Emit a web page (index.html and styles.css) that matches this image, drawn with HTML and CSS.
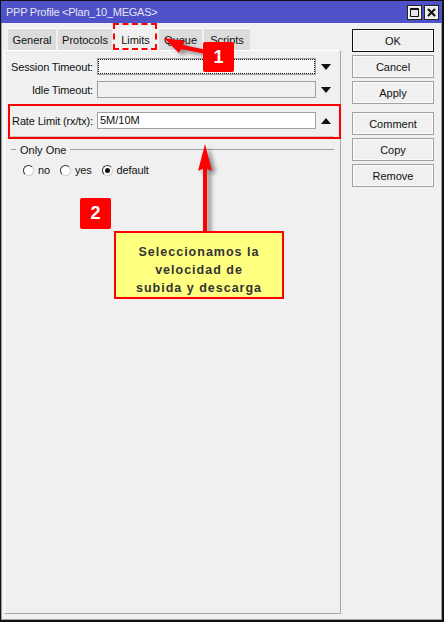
FILE: index.html
```html
<!DOCTYPE html>
<html lang="es">
<head>
<meta charset="utf-8">
<title>PPP Profile</title>
<link rel="stylesheet" href="styles.css">
</head>
<body>
<div class="window">
  <header class="titlebar">
    <span class="title">PPP Profile &lt;Plan_10_MEGAS&gt;</span>
    <div class="winbtns">
      <span class="winbtn"><svg width="11" height="11" viewBox="0 0 11 11"><path d="M1.500 1.500h8v8h-8z M1 2.500h9" fill="none" stroke="#111" stroke-width="1"/></svg></span>
      <span class="winbtn"><svg width="11" height="11" viewBox="0 0 11 11"><path d="M2 2l7 7M9 2l-7 7" fill="none" stroke="#111" stroke-width="2"/></svg></span>
    </div>
  </header>
  <div class="client">
    <div class="main">
      <nav class="tabs">
        <span class="tab t-general">General</span>
        <span class="tab t-protocols">Protocols</span>
        <span class="tab t-limits active">Limits</span>
        <span class="tab t-queue">Queue</span>
        <span class="tab t-scripts">Scripts</span>
      </nav>
      <section class="panel">
        <div class="row">
          <label class="lbl">Session Timeout:</label>
          <div class="field focus"></div>
          <svg class="tri" width="10" height="6" viewBox="0 0 10 6"><path d="M0 0h10L5 6z"/></svg>
        </div>
        <div class="row">
          <label class="lbl">Idle Timeout:</label>
          <div class="field off"></div>
          <svg class="tri" width="10" height="6" viewBox="0 0 10 6"><path d="M0 0h10L5 6z"/></svg>
        </div>
        <div class="row rate">
          <label class="lbl">Rate Limit (rx/tx):</label>
          <div class="field">5M/10M</div>
          <svg class="tri" width="10" height="6" viewBox="0 0 10 6"><path d="M0 6h10L5 0z"/></svg>
        </div>
        <div class="sep"></div>
        <div class="group-head">
          <span class="dash"></span><span class="group-title">Only One</span><span class="rule"></span>
        </div>
        <div class="radios">
          <span class="radio r-no"><i class="dot"></i>no</span>
          <span class="radio r-yes"><i class="dot"></i>yes</span>
          <span class="radio"><i class="dot on"></i>default</span>
        </div>
      </section>
    </div>
    <aside class="actions">
      <button class="btn primary">OK</button>
      <button class="btn">Cancel</button>
      <button class="btn">Apply</button>
      <button class="btn gap">Comment</button>
      <button class="btn">Copy</button>
      <button class="btn">Remove</button>
    </aside>
  </div>

  <div class="ring-tab"></div>
  <div class="ring-rate"></div>
  <svg class="arrows" width="444" height="622" viewBox="0 0 444 622">
    <defs><filter id="sh" x="-50%" y="-30%" width="200%" height="160%"><feGaussianBlur stdDeviation="2"/></filter></defs>
    <g fill="#444" opacity=".6" filter="url(#sh)" transform="translate(4 3)">
      <path d="M203 231V168h4v63z"/><path d="M205 144L212 171 205 168 198 171z"/>
      <path d="M164 38L185 41 183 45 207 50 206 54 181 49 179 53z"/>
    </g>
    <path fill="#f00" d="M203 231V166h4v65z"/>
    <path fill="#f00" d="M205 144L212 171 205 168 198 171z"/>
    <path fill="#f00" d="M164 38L185 41 183 45 207 50 206 54 181 49 179 53z"/>
  </svg>
  <span class="badge b1">1</span>
  <span class="badge b2">2</span>
  <div class="note">Seleccionamos la<br>velocidad de<br>subida y descarga</div>
</div>
</body>
</html>
```
FILE: styles.css
```css
* { box-sizing: border-box; }
html, body { margin: 0; padding: 0; background: #000; }
body { width: 444px; height: 622px; overflow: hidden; font: 11px "Liberation Sans", Arial, sans-serif; color: #111; }
.window { position: relative; width: 444px; height: 622px; background: #f0f0f0; border: 1px solid #111; border-width: 1px 2px 2px 1px; display: flex; flex-direction: column; box-shadow: inset 0 0 0 1px #a0a0a0; overflow: hidden; }
.titlebar { height: 22px; flex: none; background: #4f51c9; display: flex; align-items: center; justify-content: space-between; padding: 0 1px 0 5px; }
.title { color: #e4e4f4; letter-spacing: -.25px; white-space: nowrap; }
.winbtns { display: flex; gap: 2px; margin-right: 2px; }
.winbtn { width: 15px; height: 15px; background: #e8e8e8; border: 1px solid #222; display: flex; align-items: center; justify-content: center; box-shadow: inset 0 0 0 1px #f8f8f8; }
.client { flex: 1; display: flex; min-height: 0; }
.main { width: 340px; padding: 5px 0 6px 3px; display: flex; flex-direction: column; }
.tabs { display: flex; height: 22px; padding-left: 4px; gap: 2px; flex: none; }
.tab { background: #dcdcdc; display: flex; align-items: center; justify-content: center; border-top: 1px solid #fafafa; white-space: nowrap; }
.t-general { width: 48px; }
.t-protocols { width: 54px; }
.t-limits { width: 43px; background: #f0f0f0; }
.t-queue { width: 43px; }
.t-scripts { width: 46px; }
.panel { flex: 1; border: 1px solid #a8a8a8; border-left-color: #fff; border-top-color: #fff; padding: 7px 0 0 0; }
.row { display: flex; align-items: center; height: 17px; margin-bottom: 6px; }
.lbl { width: 88px; text-align: right; flex: none; margin-right: 4px; white-space: nowrap; letter-spacing: -.15px; }
.field { width: 219px; height: 17px; background: #f0f0f0; border: 1px solid #a0a0a0; flex: none; padding-left: 2px; line-height: 15px; }
.field.focus { background: #f8f8f8; outline: 1px dotted #111; outline-offset: -2px; }
.rate .field { background: #fff; }
.tri { margin-left: 5px; flex: none; fill: #111; }
.rate { margin-top: 14px; margin-bottom: 0; }
.sep { height: 1px; background: #c4c4c4; margin: 7px 6px 0 6px; }
.group-head { display: flex; align-items: center; margin: 6px 6px 0 6px; height: 13px; }
.dash { width: 5px; height: 1px; background: #a0a0a0; }
.group-title { padding: 0 4px; white-space: nowrap; }
.rule { flex: 1; height: 1px; background: #a0a0a0; }
.radios { display: flex; margin: 7px 0 0 18px; gap: 10px; }
.radio { display: flex; align-items: center; gap: 4px; height: 14px; letter-spacing: -.15px; }
.dot { width: 11px; height: 11px; border-radius: 50%; background: #fff; border: 1px solid #d0d0d0; border-top-color: #333; border-left-color: #333; position: relative; }
.dot.on::after { content: ""; position: absolute; left: 2px; top: 2px; width: 5px; height: 5px; border-radius: 50%; background: #111; }
.actions { flex: 1; padding: 6px 0 0 11px; display: flex; flex-direction: column; gap: 3px; }
.btn { width: 82px; height: 23px; flex: none; background: #f0f0f0; border: 1px solid #a0a0a0; box-shadow: inset 0 0 0 1px #fcfcfc; font: inherit; color: #111; padding: 0; }
.btn.primary { border-color: #111; }
.btn.gap { margin-top: 5px; }
.arrows { position: absolute; left: -1px; top: -1px; pointer-events: none; }
.ring-tab { position: absolute; left: 112px; top: 22px; width: 44px; height: 27px; border: 2px dashed #f00; }
.ring-rate { position: absolute; left: 7px; top: 103px; width: 333px; height: 35px; border: 2px solid #f00; }
.badge { position: absolute; background: #f00; color: #fff; font: bold 18px "Liberation Sans", sans-serif; display: flex; align-items: center; justify-content: center; border-radius: 2px; width: 31px; height: 31px; }
.b1 { left: 202px; top: 41px; height: 30px; }
.b2 { left: 79px; top: 197px; }
.note { position: absolute; left: 113px; top: 230px; width: 170px; height: 68px; background: #ffff80; border: 2px solid #f00; color: #333; font: bold 12.500px "Liberation Sans", sans-serif; text-align: center; padding: 10px 0 0; line-height: 18px; letter-spacing: 1px; white-space: nowrap; }
```
